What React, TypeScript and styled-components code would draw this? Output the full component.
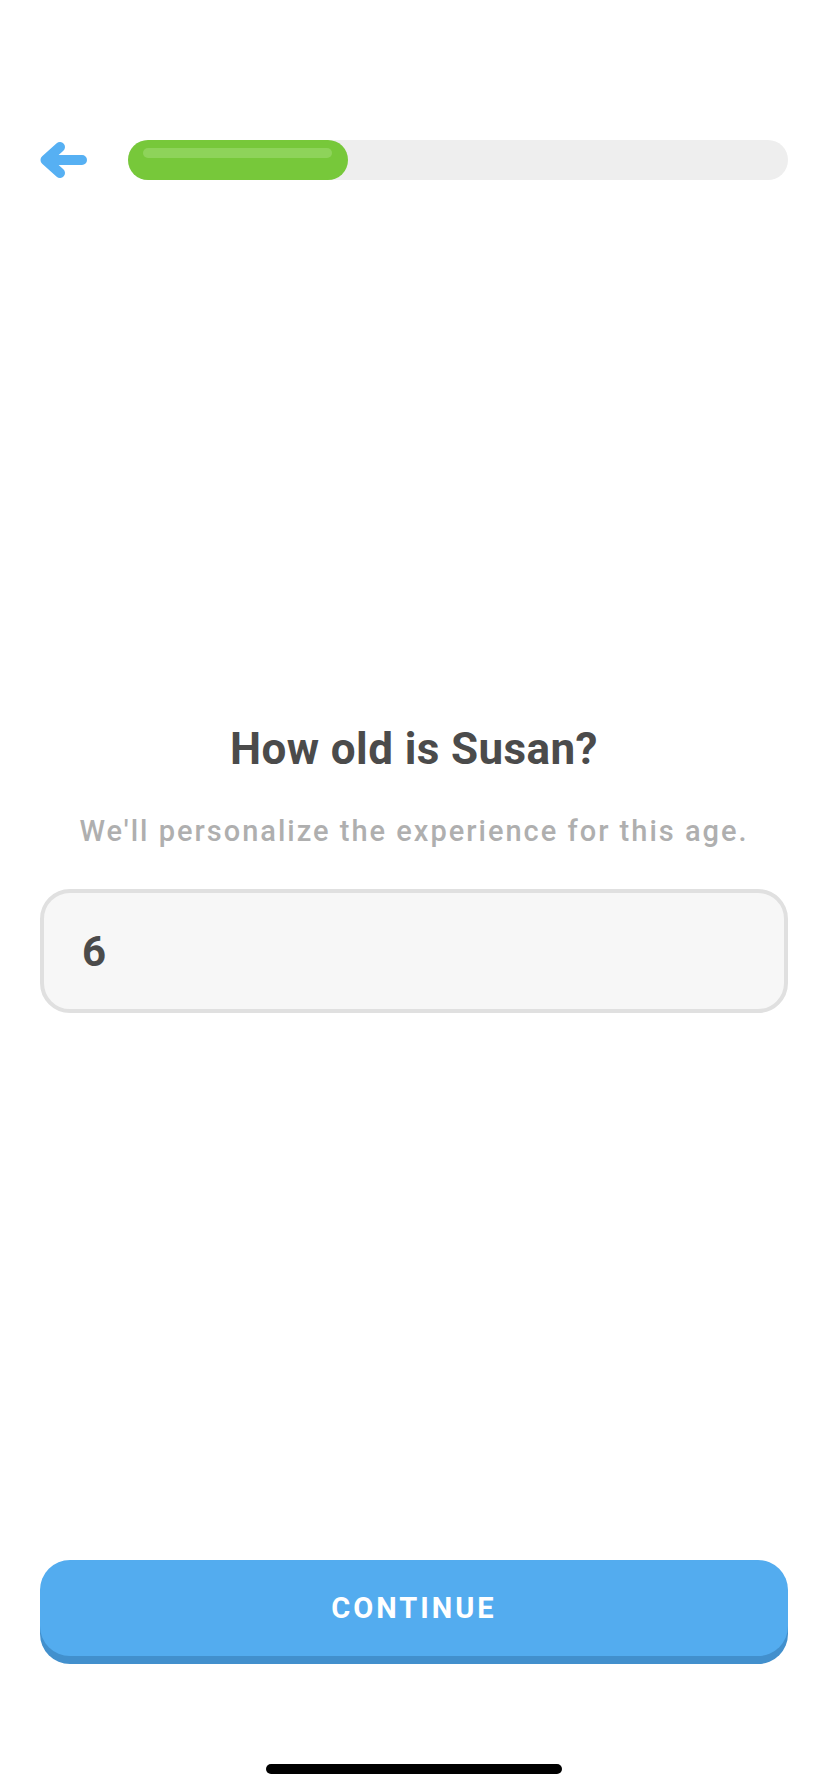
import React from "react";
import styled, { createGlobalStyle } from "styled-components";

const Global = createGlobalStyle`
  html, body { margin: 0; padding: 0; background: #ffffff; }
  body { font-family: Roboto, "Noto Sans", "DejaVu Sans", sans-serif; }
  * { box-sizing: border-box; }
`;

const Screen = styled.div`
  width: 828px;
  height: 1792px;
  display: flex;
  flex-direction: column;
  background: #ffffff;
`;

const Header = styled.header`
  margin-top: 140px;
  height: 40px;
  padding: 0 40px;
  display: flex;
  align-items: center;
  gap: 40px;
`;

const BackButton = styled.button`
  width: 48px;
  height: 40px;
  padding: 0;
  border: none;
  background: none;
  display: flex;
  align-items: center;
  justify-content: center;
`;

const Track = styled.div`
  flex: 1;
  height: 40px;
  border-radius: 20px;
  background: #eeeeee;
  display: flex;
`;

const Fill = styled.div`
  height: 40px;
  border-radius: 20px;
  background: #77c83a;
  padding: 8px 16px 0 15px;
`;

const Shine = styled.div`
  height: 10px;
  border-radius: 5px;
  background: #8ed35a;
`;

const Main = styled.main`
  display: flex;
  flex-direction: column;
  align-items: center;
  padding: 0 40px;
  margin-top: 545px;
`;

const Title = styled.h1`
  margin: 0;
  font-size: 44px;
  line-height: 48px;
  font-weight: 700;
  color: #4b4b4b;
  letter-spacing: 0.4px;
`;

const Subtitle = styled.p`
  margin: 40px 0 0;
  font-size: 29px;
  line-height: 36px;
  font-weight: 500;
  color: #afafaf;
  letter-spacing: 2px;
  white-space: nowrap;
`;

const AgeField = styled.div`
  align-self: stretch;
  margin-top: 40px;
  height: 124px;
  border: 4px solid #e0e0e0;
  border-radius: 30px;
  background: #f7f7f7;
  display: flex;
  align-items: center;
  padding: 0 38px;
  font-size: 42px;
  font-weight: 700;
  color: #4b4b4b;
`;

const Spacer = styled.div`
  flex: 1;
`;

const Footer = styled.footer`
  padding: 0 40px;
  display: flex;
  flex-direction: column;
  align-items: center;
`;

const ContinueButton = styled.button`
  width: 100%;
  height: 96px;
  border: none;
  border-radius: 30px;
  background: #53acef;
  box-shadow: 0 8px 0 #4290cd;
  color: #ffffff;
  font-family: Roboto, "Noto Sans", sans-serif;
  font-size: 29px;
  font-weight: 700;
  letter-spacing: 3px;
  display: flex;
  align-items: center;
  justify-content: center;
`;

const HomeIndicator = styled.div`
  margin-top: 108px;
  margin-bottom: 18px;
  width: 296px;
  height: 10px;
  border-radius: 5px;
  background: #000000;
`;

export default function App() {
  return (
    <>
      <Global />
      <Screen>
        <Header>
          <BackButton aria-label="Back">
            <svg width="48" height="40" viewBox="0 0 48 40" fill="none">
              <path
                d="M20 7 L5.5 20 L20 33 M5.5 20 H42"
                stroke="#56b0f3"
                strokeWidth="10"
                strokeLinecap="round"
                strokeLinejoin="round"
              />
            </svg>
          </BackButton>
          <Track>
            <Fill style={{ width: `${(220 / 660) * 100}%` }}>
              <Shine />
            </Fill>
          </Track>
        </Header>
        <Main>
          <Title>How old is Susan?</Title>
          <Subtitle>We'll personalize the experience for this age.</Subtitle>
          <AgeField>6</AgeField>
        </Main>
        <Spacer />
        <Footer>
          <ContinueButton>CONTINUE</ContinueButton>
          <HomeIndicator />
        </Footer>
      </Screen>
    </>
  );
}
